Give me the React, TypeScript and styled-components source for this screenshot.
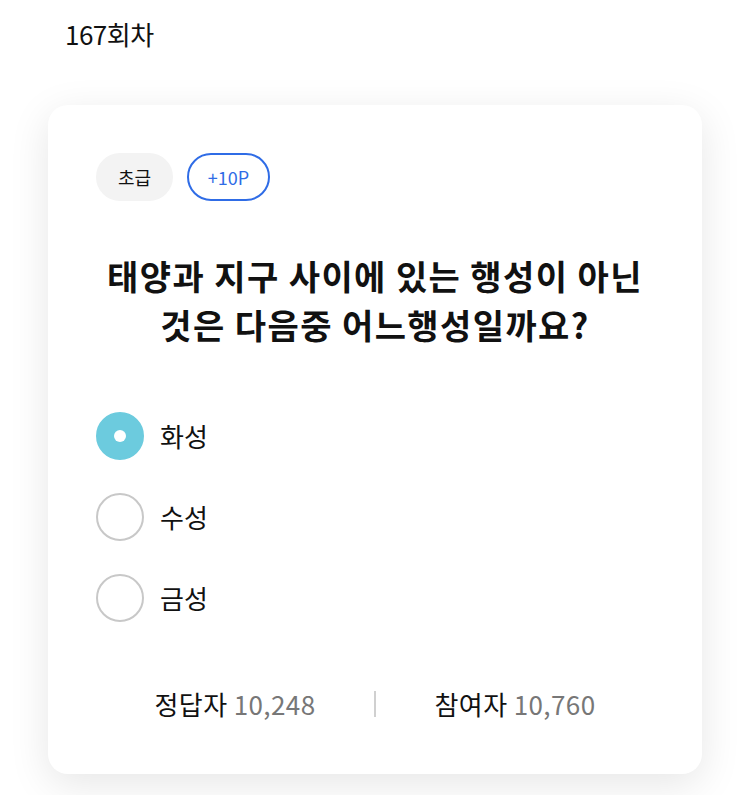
import React, { useState } from "react";
import styled, { createGlobalStyle } from "styled-components";

const GlobalStyle = createGlobalStyle`
  body {
    margin: 0;
    background: #ffffff;
    font-family: "Noto Sans CJK KR", "Noto Sans", sans-serif;
    color: #111111;
  }
`;

const Page = styled.div`
  width: 750px;
  height: 795px;
  overflow: hidden;
  box-sizing: border-box;
  padding: 0 48px;
`;

const Round = styled.h2`
  margin: 0;
  padding: 16px 0 0 17px;
  font-size: 26px;
  font-weight: 400;
  line-height: 36px;
  letter-spacing: -0.5px;
`;

const Card = styled.section`
  margin-top: 53px;
  background: #ffffff;
  border-radius: 20px;
  box-shadow: 0 10px 40px rgba(0, 0, 0, 0.1);
  padding: 48px 48px 0;
  height: 669px;
  box-sizing: border-box;
`;

const Chips = styled.div`
  display: flex;
  gap: 14px;
`;

const Chip = styled.span<{ $outline?: boolean }>`
  display: inline-flex;
  align-items: center;
  justify-content: center;
  height: 48px;
  box-sizing: border-box;
  border-radius: 24px;
  font-size: 18px;
  padding: 0 18px;
  min-width: ${(p) => (p.$outline ? "83px" : "77px")};
  background: ${(p) => (p.$outline ? "#ffffff" : "#f3f3f3")};
  color: ${(p) => (p.$outline ? "#2f6ce6" : "#111111")};
  border: 2px solid ${(p) => (p.$outline ? "#2f6ce6" : "#f3f3f3")};
`;

const Question = styled.h1`
  margin: 50px 0 0;
  text-align: center;
  font-size: 34px;
  font-weight: 700;
  line-height: 49px;
  letter-spacing: 1.4px;
`;

const Options = styled.ul`
  list-style: none;
  margin: 63px 0 0;
  padding: 0;
  display: flex;
  flex-direction: column;
  gap: 33px;
`;

const Option = styled.li`
  display: flex;
  align-items: center;
  gap: 16px;
  cursor: pointer;
  font-size: 26px;
  line-height: 48px;
`;

const Radio = styled.span<{ $checked: boolean }>`
  width: 48px;
  height: 48px;
  border-radius: 50%;
  box-sizing: border-box;
  display: flex;
  align-items: center;
  justify-content: center;
  background: ${(p) => (p.$checked ? "#6ccbde" : "#ffffff")};
  border: 2px solid ${(p) => (p.$checked ? "#6ccbde" : "#c8c8c8")};
  &::after {
    content: "";
    width: 12px;
    height: 12px;
    border-radius: 50%;
    background: #ffffff;
    display: ${(p) => (p.$checked ? "block" : "none")};
  }
`;

const Stats = styled.div`
  margin-top: 64px;
  display: grid;
  grid-template-columns: 1fr auto 1fr;
  align-items: center;
  font-size: 26px;
  line-height: 36px;
`;

const Stat = styled.div`
  text-align: center;
  letter-spacing: 0.4px;
`;

const Count = styled.span`
  color: #777777;
`;

const Divider = styled.span`
  width: 2px;
  height: 26px;
  background: #d0d0d0;
`;

const answers = ["화성", "수성", "금성"];

export default function App() {
  const [picked, setPicked] = useState(0);

  return (
    <Page>
      <GlobalStyle />
      <Round>167회차</Round>
      <Card>
        <Chips>
          <Chip>초급</Chip>
          <Chip $outline>+10P</Chip>
        </Chips>
        <Question>
          태양과 지구 사이에 있는 행성이 아닌
          <br />
          것은 다음중 어느행성일까요?
        </Question>
        <Options>
          {answers.map((a, i) => (
            <Option key={a} onClick={() => setPicked(i)}>
              <Radio $checked={picked === i} />
              {a}
            </Option>
          ))}
        </Options>
        <Stats>
          <Stat>
            정답자 <Count>10,248</Count>
          </Stat>
          <Divider />
          <Stat>
            참여자 <Count>10,760</Count>
          </Stat>
        </Stats>
      </Card>
    </Page>
  );
}
